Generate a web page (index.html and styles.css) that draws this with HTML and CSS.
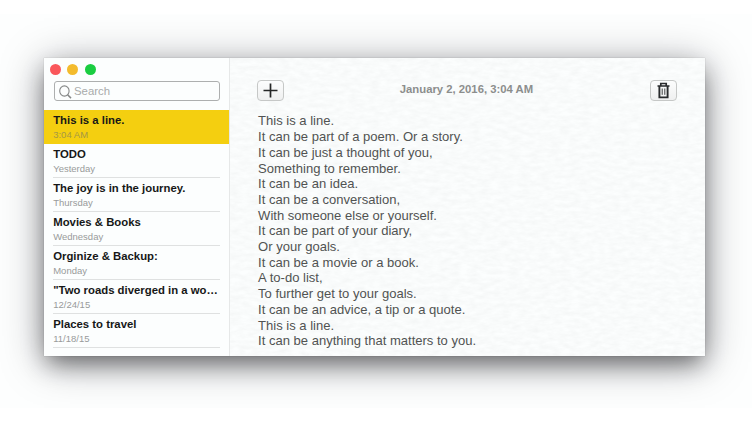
FILE: index.html
```html
<!DOCTYPE html>
<html lang="en">
<head>
<meta charset="utf-8">
<title>Notes</title>
<link rel="stylesheet" href="styles.css">
</head>
<body>
<div class="stage">
<main class="window">
  <aside class="sidebar">
    <div class="lights"><i class="light red"></i><i class="light amber"></i><i class="light green"></i></div>
    <div class="search">
      <svg width="13" height="14" viewBox="0 0 13 14" fill="none" stroke="#858787"><ellipse cx="5.4" cy="6" rx="4.7" ry="5.1" stroke-width="1.1"/><path d="M8.6 9.7 12 13.1" stroke-width="1.5"/></svg>
      <span>Search</span>
    </div>
    <ul class="notes">
      <li class="note active"><div class="inner"><b>This is a line.</b><small>3:04 AM</small></div></li>
      <li class="note"><div class="inner"><b>TODO</b><small>Yesterday</small></div></li>
      <li class="note"><div class="inner"><b>The joy is in the journey.</b><small>Thursday</small></div></li>
      <li class="note"><div class="inner"><b>Movies &amp; Books</b><small>Wednesday</small></div></li>
      <li class="note"><div class="inner"><b>Orginize &amp; Backup:</b><small>Monday</small></div></li>
      <li class="note"><div class="inner"><b>"Two roads diverged in a wo…</b><small>12/24/15</small></div></li>
      <li class="note"><div class="inner"><b>Places to travel</b><small>11/18/15</small></div></li>
    </ul>
  </aside>
  <section class="editor">
    <svg class="paper" width="100%" height="100%">
      <filter id="grain" x="0" y="0" width="100%" height="100%" color-interpolation-filters="sRGB">
        <feTurbulence type="fractalNoise" baseFrequency="0.1 0.24" numOctaves="3" seed="5"/>
        <feColorMatrix values="0 0 0 0 .2  0 0 0 0 .22  0 0 0 0 .21  .06 0 0 0 -.015"/>
      </filter>
      <rect width="100%" height="100%" filter="url(#grain)"/>
    </svg>
    <header class="toolbar">
      <button class="btn" aria-label="New note"><svg width="15" height="15" viewBox="0 0 15 15" stroke="#252727" stroke-width="1.7"><path d="M7.5 .5V14.5M.5 7.5H14.5"/></svg></button>
      <time>January 2, 2016, 3:04 AM</time>
      <button class="btn" aria-label="Delete note"><svg width="13" height="17" viewBox="0 0 13 17" fill="none" stroke="#292b2d"><path d="M3.8 4V1.5H9.2V4M.5 4H12.5" stroke-width="1.7"/><path d="M2.4 4V15.4H10.6V4" stroke-width="1.9"/><path d="M5.2 6.5V12.8M7.8 6.5V12.8" stroke-width=".9"/></svg></button>
    </header>
    <div class="text">This is a line.<br>It can be part of a poem. Or a story.<br>It can be just a thought of you,<br>Something to remember.<br>It can be an idea.<br>It can be a conversation,<br>With someone else or yourself.<br>It can be part of your diary,<br>Or your goals.<br>It can be a movie or a book.<br>A to-do list,<br>To further get to your goals.<br>It can be an advice, a tip or a quote.<br>This is a line.<br>It can be anything that matters to you.</div>
  </section>
</main>
</div>
</body>
</html>
```
FILE: styles.css
```css
* { box-sizing: border-box; }
body {
  margin: 0;
  padding: 14px 0 15px;
  height: 423px;
  overflow: hidden;
  background: #fff;
  font-family: "Liberation Sans", Arial, sans-serif;
}
.stage {
  height: 394px;
  padding: 44px 47px 0 44px;
  overflow: hidden;
  background: #fdfefe;
}
.window {
  display: flex;
  width: 661px;
  height: 298px;
  background: #fcfefe;
  box-shadow: 0 10px 22px -3px rgba(0, 0, 0, .46), 0 6px 40px rgba(10, 10, 25, .36), 0 0 1px rgba(0, 0, 0, .25);
}
.sidebar {
  width: 186.4px;
  border-right: 1px solid #e6e8e8;
  padding-top: 6px;
}
.lights { display: flex; gap: 6.5px; padding-left: 5.5px; }
.light { width: 11px; height: 11px; border-radius: 50%; }
.red { background: #fa575b; }
.amber { background: #f3bb2d; }
.green { background: #1acd41; }
.search {
  display: flex;
  align-items: center;
  height: 20px;
  margin: 6px 9.5px 9px 10px;
  padding: 1px 0 0 4px;
  gap: 2px;
  border: 1px solid #adafaf;
  border-radius: 3px;
  font-size: 11.4px;
  line-height: 18px;
  color: #a9abab;
}
.search span { margin-top: -2px; }
.notes { list-style: none; margin: 0; padding: 0; }
.note { height: 34px; padding: 0 9.5px 0 9.2px; }
.inner {
  height: 34px;
  padding-top: 3px;
  border-bottom: 1px solid #dfe1e1;
}
.note b {
  display: block;
  font-size: 11.35px;
  line-height: 15px;
  color: #161717;
  white-space: nowrap;
}
.note small {
  display: block;
  font-size: 9.5px;
  line-height: 13px;
  color: #999b9b;
}
.active { background: #f4cf10; }
.active .inner { border-color: transparent; }
.active small { color: #a49745; }
.editor { position: relative; flex: 1; padding: 22px 28px 0 26.5px; }
.paper { position: absolute; inset: 0; }
.toolbar {
  position: relative;
  display: flex;
  justify-content: space-between;
  align-items: center;
  height: 21px;
}
.toolbar time { margin: -3px 1px 0 0; font-size: 11.3px; font-weight: bold; color: #8c8e8d; }
.btn {
  display: flex;
  align-items: center;
  justify-content: center;
  width: 27px;
  height: 21px;
  padding: 0;
  border: 1px solid #c6c8c7;
  border-radius: 4px;
  background: linear-gradient(#fcfdfd, #eff0f0);
}
.text {
  position: relative;
  margin: 12.4px 0 0 1.2px;
  font-size: 13.04px;
  line-height: 15.7px;
  color: #515352;
  white-space: nowrap;
}
```
